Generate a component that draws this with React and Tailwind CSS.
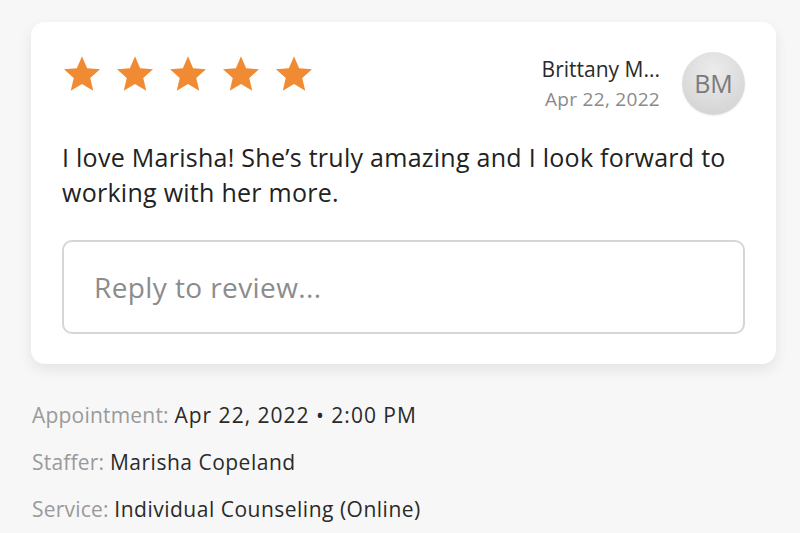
import React from "react";

function Star() {
  return (
    <svg width="40" height="38" viewBox="0 0 24 23" className="block">
      <path
        d="M12 0.8l3.1 7.2 7.8 0.7-5.9 5.2 1.8 7.7L12 17.5l-6.8 4.1 1.8-7.7-5.9-5.2 7.8-0.7z"
        fill="#f08b33"
      />
    </svg>
  );
}

export default function App() {
  const font = { fontFamily: "'Open Sans', Lato, sans-serif" };
  return (
    <div className="w-[800px] h-[533px] overflow-hidden bg-[#f7f7f7]" style={font}>
      <div className="ml-[31px] mt-[22px] w-[745px] h-[342px] rounded-[14px] bg-white shadow-[0_6px_14px_rgba(0,0,0,0.08)] pl-[31px] pr-[31px] pt-[30px]">
        <div className="flex items-start justify-between h-[64px]">
          <div className="flex gap-[13px] mt-[3px]">
            <Star />
            <Star />
            <Star />
            <Star />
            <Star />
          </div>
          <div className="flex items-start gap-[22px]">
            <div className="flex flex-col items-end pt-[2px]">
              <div className="text-[21px] leading-[30px] text-[#2a2a2a]">Brittany M...</div>
              <div className="text-[19px] leading-[26px] text-[#8a8a8a] mt-[2px] tracking-[0.3px]">Apr 22, 2022</div>
            </div>
            <div className="w-[63px] h-[63px] rounded-full bg-[radial-gradient(circle_at_50%_30%,#ececec,#cfcfcf)] flex items-center justify-center text-[25px] text-[#7a7a7a] shadow-[0_1px_2px_rgba(0,0,0,0.08)]">
              BM
            </div>
          </div>
        </div>
        <p className="mt-[24px] text-[25px] leading-[35px] text-[#222] tracking-[0.27px]">
          I love Marisha! She’s truly amazing and I look forward to working with her more.
        </p>
        <div className="mt-[30px] h-[94px] rounded-[10px] border-2 border-[#d6d6d6] flex items-center pl-[30px]">
          <span className="text-[28px] text-[#8c8c8c] tracking-[0.4px]">Reply to review...</span>
        </div>
      </div>
      <div className="pl-[32px] pt-[36px] flex flex-col gap-[17px] text-[21px] leading-[30px] tracking-[0.2px]">
        <div>
          <span className="text-[#9a9a9a]">Appointment:</span>{" "}
          <span className="text-[#2a2a2a] tracking-[1px]">Apr 22, 2022 • 2:00 PM</span>
        </div>
        <div>
          <span className="text-[#9a9a9a]">Staffer:</span>{" "}
          <span className="text-[#2a2a2a] tracking-[0.5px]">Marisha Copeland</span>
        </div>
        <div>
          <span className="text-[#9a9a9a]">Service:</span>{" "}
          <span className="text-[#2a2a2a] tracking-[0.5px]">Individual Counseling (Online)</span>
        </div>
      </div>
    </div>
  );
}
